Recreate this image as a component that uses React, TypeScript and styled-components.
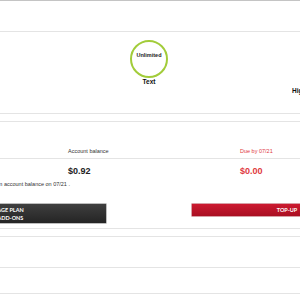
import React from "react";
import styled, { createGlobalStyle } from "styled-components";

const Global = createGlobalStyle`
  html, body { margin: 0; padding: 0; background: #fff; overflow: hidden; }
  body { font-family: "Liberation Sans", Arial, sans-serif; color: #222; }
`;

const Page = styled.div`
  width: 640px;
  margin-left: -104px;
`;

const TopStrip = styled.div`
  height: 1px;
  background: #c4c4c4;
`;

const Band = styled.div<{ $h: number }>`
  height: ${(p) => p.$h}px;
  border-bottom: 1px solid #e4e4e4;
`;

const PlanSection = styled.section`
  height: 73px;
  padding: 8px 0 0 223px;
  display: flex;
  gap: 113px;
  align-items: flex-start;
  border-bottom: 1px solid #e4e4e4;
`;

const PlanItem = styled.div`
  width: 60px;
  display: flex;
  flex-direction: column;
  align-items: center;
`;

const Ring = styled.div`
  width: 34px;
  height: 34px;
  border: 2px solid #a2cc3a;
  border-radius: 50%;
  display: flex;
  align-items: center;
  justify-content: center;
`;

const RingText = styled.span`
  font-size: 5.5px;
  font-weight: 700;
  line-height: 7px;
  margin-top: -7px;
  color: #222;
`;

const PlanLabel = styled.div<{ $offset?: number }>`
  font-size: 6.5px;
  font-weight: 700;
  line-height: 8px;
  white-space: nowrap;
  margin-top: ${(p) => p.$offset ?? 0}px;
  color: #111;
`;

const Grid = styled.div<{ $h: number; $pt: number; $border?: boolean }>`
  display: grid;
  grid-template-columns: repeat(3, 172px);
  height: ${(p) => p.$h}px;
  padding-top: ${(p) => p.$pt}px;
  box-sizing: border-box;
  border-bottom: ${(p) => (p.$border ? "1px solid #e4e4e4" : "none")};
`;

const Label = styled.div<{ $red?: boolean }>`
  font-size: 5.5px;
  line-height: 7px;
  color: ${(p) => (p.$red ? "#e0393e" : "#333")};
  white-space: nowrap;
`;

const Amount = styled.div<{ $red?: boolean }>`
  font-size: 9px;
  font-weight: 700;
  line-height: 11px;
  color: ${(p) => (p.$red ? "#e0393e" : "#222")};
`;

const NoteBox = styled.div`
  width: 174px;
  margin-top: 4px;
  display: flex;
  justify-content: flex-end;
`;

const Note = styled.span`
  font-size: 5.5px;
  line-height: 7px;
  color: #333;
  white-space: nowrap;
`;

const ButtonRow = styled.div`
  display: flex;
  align-items: flex-start;
  gap: 84px;
  padding: 15px 0 4px 19px;
  border-bottom: 1px solid #e4e4e4;
`;

const DarkButton = styled.button`
  width: 192px;
  height: 21px;
  box-sizing: border-box;
  border: 1px solid #bdbdbd;
  border-radius: 1px;
  background: linear-gradient(#3f3f3f, #242424);
  color: #fff;
  font-family: "Lato", "Liberation Sans", sans-serif;
  font-weight: 700;
  font-size: 5.5px;
  line-height: 8px;
  text-align: left;
  padding: 1.5px 0 0 68px;
  display: flex;
  flex-direction: column;
`;

const RedButton = styled.button`
  width: 192px;
  height: 14px;
  box-sizing: border-box;
  border: 1px solid #d7a0a6;
  border-radius: 1px;
  background: linear-gradient(#cc1a30, #a90f22);
  color: #fff;
  font-family: "Lato", "Liberation Sans", sans-serif;
  font-weight: 700;
  font-size: 5.5px;
  line-height: 12px;
  padding: 0;
  text-align: center;
`;

export default function App() {
  return (
    <>
      <Global />
      <Page>
        <TopStrip />
        <Band $h={30} />
        <PlanSection>
          <PlanItem>
            <Ring>
              <RingText>Unlimited</RingText>
            </Ring>
            <PlanLabel>Text</PlanLabel>
          </PlanItem>
          <PlanLabel $offset={47}>High-Speed Data</PlanLabel>
        </PlanSection>
        <Band $h={7} />
        <Grid $h={37} $pt={26} $border>
          <Label>Current plan</Label>
          <Label>Account balance</Label>
          <Label $red>Due by 07/21</Label>
        </Grid>
        <Grid $h={18} $pt={7}>
          <Amount>$30</Amount>
          <Amount>$0.92</Amount>
          <Amount $red>$0.00</Amount>
        </Grid>
        <NoteBox>
          <Note>Your plan will renew using your main account balance on 07/21 .</Note>
        </NoteBox>
        <ButtonRow>
          <DarkButton>
            <span>MANAGE PLAN</span>
            <span>AND ADD-ONS</span>
          </DarkButton>
          <RedButton>TOP-UP</RedButton>
        </ButtonRow>
        <Band $h={7} />
        <Band $h={30} />
        <Band $h={25} />
      </Page>
    </>
  );
}
